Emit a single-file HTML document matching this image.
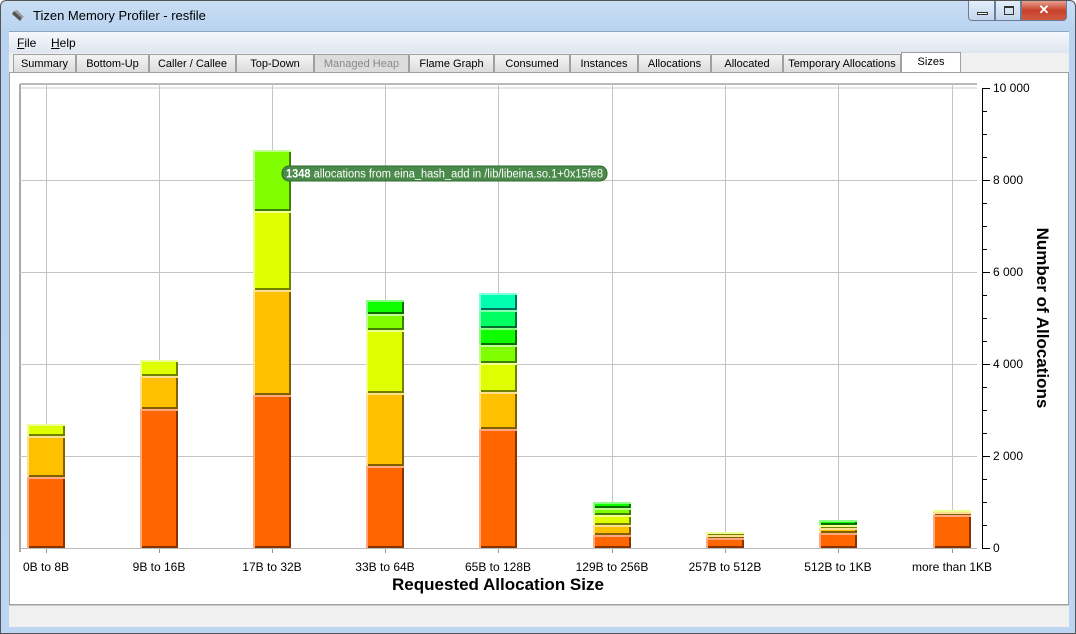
<!DOCTYPE html>
<html><head><meta charset="utf-8"><style>
*{margin:0;padding:0;box-sizing:border-box}
body{width:1076px;height:634px;overflow:hidden;background:#fff;font-family:"Liberation Sans",sans-serif;font-size:12px;position:relative}
.win{position:absolute;left:0;top:0;width:1076px;height:634px;background:linear-gradient(#c9def5,#b9d3f0 30px,#bcd5f0);border:1px solid #555;border-radius:6px 6px 0 0}
.title{position:absolute;left:32px;top:7px;font-size:13px;color:#000}
.menu{position:absolute;left:8px;top:30px;width:1060px;height:22px;background:linear-gradient(#f5f8fc,#dfe6f0);border-top:1px solid #8ea3bd}
.menu span{position:absolute;top:4px;font-size:12px}
.tabbar{position:absolute;left:8px;top:52px;width:1060px;height:20px;background:#f0f0f0}
.tab{position:absolute;top:1px;height:19px;border:1px solid #a0a0a0;background:linear-gradient(#f4f4f4,#dcdcdc);text-align:center;line-height:18px;font-size:11px;white-space:nowrap;overflow:hidden}
.content{position:absolute;left:8px;top:71px;width:1060px;height:533px;background:#fff;border:1px solid #a0a0a0}
.status{position:absolute;left:8px;top:604px;width:1060px;height:22px;background:#f0f0f0;border-top:1px solid #c8c8c8}
.btn{position:absolute;top:0;height:20px;border:1px solid #6b7d96;border-top:none}
</style></head><body>
<div class="win">
<svg style="position:absolute;left:10px;top:8px" width="14" height="14"><path d="M3 2 L11 9 L9 12 L1 5 Z" fill="#555"/><path d="M3 2 L6 1 L13 8 L11 9Z" fill="#999"/></svg>
<div class="title">Tizen Memory Profiler - resfile</div>
<div class="btn" style="left:967px;width:27px;background:linear-gradient(#e4eef9,#c4d6ec);border-radius:0 0 0 4px"><div style="position:absolute;left:8px;top:11px;width:11px;height:3px;border:1px solid #333;background:#fff"></div></div>
<div class="btn" style="left:994px;width:26px;background:linear-gradient(#e4eef9,#c4d6ec)"><div style="position:absolute;left:8px;top:5px;width:10px;height:9px;border:1px solid #333;border-top-width:2px"></div></div>
<div class="btn" style="left:1020px;width:46px;background:linear-gradient(#e8a090,#c7412a 50%,#d05a40);border-radius:0 0 4px 0;color:#fff;font-weight:bold;text-align:center;font-size:13px;line-height:17px">✕</div>
<div class="menu"><span style="left:8px"><u>F</u>ile</span><span style="left:42px"><u>H</u>elp</span></div>
<div class="tabbar">
<div class="tab" style="left:4px;width:63px">Summary</div>
<div class="tab" style="left:67px;width:73px">Bottom-Up</div>
<div class="tab" style="left:140px;width:87px">Caller / Callee</div>
<div class="tab" style="left:227px;width:78px">Top-Down</div>
<div class="tab" style="left:305px;width:95px;color:#8a8a8a;background:#dcdcdc">Managed Heap</div>
<div class="tab" style="left:400px;width:85px">Flame Graph</div>
<div class="tab" style="left:485px;width:76px">Consumed</div>
<div class="tab" style="left:561px;width:68px">Instances</div>
<div class="tab" style="left:629px;width:73px">Allocations</div>
<div class="tab" style="left:702px;width:72px">Allocated</div>
<div class="tab" style="left:774px;width:118px">Temporary Allocations</div>
<div class="tab" style="left:892px;width:60px;top:-1px;height:21px;background:#fff;border-bottom:none;line-height:18px">Sizes</div>
</div>
<div class="content"></div>
<div class="status"></div>
</div>
<svg id="c" style="position:absolute;left:0;top:0" width="1076" height="634" font-family="Liberation Sans, sans-serif"></svg>
<script>
var s='';
var C=[46,159,272,385,498,612,725,838,952];
s+='<line x1="20" y1="84" x2="977" y2="84" stroke="#bbb" stroke-width="2"/><line x1="20" y1="88" x2="977" y2="88" stroke="#ccc"/>';
s+='<line x1="20" y1="84" x2="20" y2="552" stroke="#aaa" stroke-width="2"/>';
C.forEach(function(x){s+='<line x1="'+x+'.5" y1="84" x2="'+x+'.5" y2="553" stroke="#c4c4c4"/>';});
[180,272,364,456].forEach(function(y){s+='<line x1="20" y1="'+y+'.5" x2="977" y2="'+y+'.5" stroke="#c4c4c4"/>';});
s+='<line x1="20" y1="548.5" x2="977" y2="548.5" stroke="#bbb"/>';
var O='#ff6600',Y='#ffc000',L='#dfff00',G='#7fff00',H='#10ff00',M='#00ff60',T='#00ffb0';
var D={'#ff6600':['#ffa880','#8a3300'],'#ffc000':['#ffe090','#806000'],'#dfff00':['#efff90','#708000'],'#7fff00':['#bfff90','#408000'],'#10ff00':['#88ff80','#087000'],'#00ff60':['#80ffb0','#007030'],'#00ffb0':['#80ffd8','#007058']};
var B=[[[548,477,O],[477,436,Y],[436,424,L]],
[[548,409,O],[409,376,Y],[376,360,L]],
[[548,395,O],[395,290,Y],[290,211,L],[211,150,G]],
[[548,466,O],[466,393,Y],[393,330,L],[330,314,G],[314,300,H]],
[[548,429,O],[429,392,Y],[392,363,L],[363,345,G],[345,328,H],[328,310,M],[310,293,T]],
[[548,535,O],[535,525,Y],[525,515,L],[515,508,G],[508,502,H]],
[[548,538,O],[538,535,Y],[535,532,L]],
[[548,533,O],[533,528,Y],[528,525,L],[525,520,H]],
[[548,515,O],[515,512,Y],[512,510,L]]];
B.forEach(function(b,i){var x=C[i]-19,w=38;b.forEach(function(g){var y=g[1],h=g[0]-g[1],d=D[g[2]];
s+='<rect x="'+x+'" y="'+y+'" width="'+w+'" height="'+h+'" fill="'+d[0]+'"/>';
s+='<rect x="'+(x+2)+'" y="'+(y+2)+'" width="'+(w-2)+'" height="'+Math.max(0,h-2)+'" fill="'+d[1]+'"/>';
s+='<rect x="'+(x+2)+'" y="'+(y+2)+'" width="'+(w-4)+'" height="'+Math.max(0,h-4)+'" fill="'+g[2]+'"/>';});});
s+='<line x1="982.5" y1="88" x2="982.5" y2="549" stroke="#000"/>';
for(var v=0;v<=10000;v+=500){var y=548-v*0.046;s+='<line x1="982" y1="'+(Math.round(y)+.5)+'" x2="'+(v%2000==0?990:987)+'" y2="'+(Math.round(y)+.5)+'" stroke="#000"/>';}
[[0,'0'],[2000,'2 000'],[4000,'4 000'],[6000,'6 000'],[8000,'8 000'],[10000,'10 000']].forEach(function(t){s+='<text x="993" y="'+(548-t[0]*0.046+4)+'" font-size="12">'+t[1]+'</text>';});
s+='<text transform="translate(1037,318) rotate(90)" text-anchor="middle" font-size="17" font-weight="bold">Number of Allocations</text>';
var Lb=['0B to 8B','9B to 16B','17B to 32B','33B to 64B','65B to 128B','129B to 256B','257B to 512B','512B to 1KB','more than 1KB'];
C.forEach(function(x,i){s+='<line x1="'+x+'.5" y1="549" x2="'+x+'.5" y2="553" stroke="#999"/><text x="'+x+'" y="571" text-anchor="middle" font-size="12">'+Lb[i]+'</text>';});
s+='<text x="498" y="590" text-anchor="middle" font-size="17" font-weight="bold">Requested Allocation Size</text>';
s+='<rect x="282" y="166" width="325" height="15" rx="7" fill="#4a8a4a" stroke="#2d6a2d"/><text x="286" y="177.5" font-size="11.5" fill="#fff" textLength="317" lengthAdjust="spacingAndGlyphs"><tspan font-weight="bold">1348</tspan> allocations from eina_hash_add in /lib/libeina.so.1+0x15fe8</text>';
document.getElementById('c').innerHTML=s;
</script>
</body></html>
